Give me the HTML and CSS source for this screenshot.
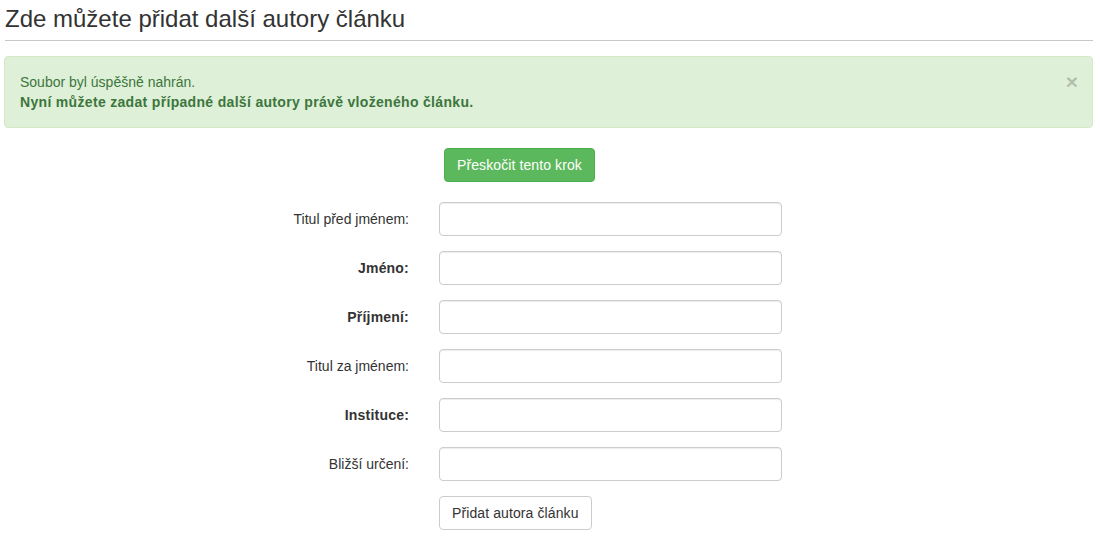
FILE: index.html
```html
<!DOCTYPE html>
<html lang="cs">
<head>
<meta charset="utf-8">
<title>Další autoři</title>
<link rel="stylesheet" href="styles.css">
</head>
<body>
<div class="page">
  <h2 class="page-title">Zde můžete přidat další autory článku</h2>
  <hr class="rule">
  <div class="alert">
    <span class="close">×</span>
    <div>Soubor byl úspěšně nahrán.</div>
    <div class="strong">Nyní můžete zadat případné další autory právě vloženého článku.</div>
  </div>
  <div class="skip-row">
    <button class="btn btn-success" type="button">Přeskočit tento krok</button>
  </div>
  <form class="form">
    <div class="row"><label class="label">Titul před jménem:</label><input class="input" type="text"></div>
    <div class="row"><label class="label bold">Jméno:</label><input class="input" type="text"></div>
    <div class="row"><label class="label bold">Příjmení:</label><input class="input" type="text"></div>
    <div class="row"><label class="label">Titul za jménem:</label><input class="input" type="text"></div>
    <div class="row"><label class="label bold">Instituce:</label><input class="input" type="text"></div>
    <div class="row"><label class="label">Bližší určení:</label><input class="input" type="text"></div>
    <div class="row"><span class="label"></span><button class="btn btn-default" type="button">Přidat autora článku</button></div>
  </form>
</div>
</body>
</html>
```

FILE: styles.css
```css
* { box-sizing: border-box; }
html, body { margin: 0; padding: 0; background: #fff; }
body {
  font-family: "Liberation Sans", Arial, Helvetica, sans-serif;
  font-size: 14px;
  line-height: 20px;
  color: #333;
}
.page {
  padding: 5px 9px 0 4px;
}
.page-title {
  margin: 0;
  padding-left: 1px;
  font-size: 24px;
  font-weight: 400;
  line-height: 27px;
  color: #333;
}
.rule {
  margin: 8px 0 0 1px;
  border: 0;
  border-top: 1px solid #c8c8c8;
  height: 0;
}
.alert {
  position: relative;
  margin-top: 15px;
  padding: 15px 35px 15px 15px;
  background: #dff0d8;
  border: 1px solid #d6e9c6;
  border-radius: 4px;
  color: #3c763d;
}
.alert .strong { font-weight: 700; letter-spacing: 0.32px; }
.close {
  position: absolute;
  top: 14px;
  right: 14px;
  font-size: 21px;
  font-weight: 700;
  line-height: 1;
  color: #000;
  opacity: 0.2;
}
.skip-row {
  margin-top: 20px;
  padding-left: 440px;
}
.btn {
  display: inline-block;
  height: 34px;
  padding: 6px 12px;
  font-family: inherit;
  font-size: 14px;
  line-height: 20px;
  letter-spacing: 0.1px;
  border: 1px solid transparent;
  border-radius: 4px;
  cursor: pointer;
}
.btn-success {
  background: #5cb85c;
  border-color: #4cae4c;
  color: #fff;
}
.btn-default {
  background: #fff;
  border-color: #ccc;
  color: #333;
}
.form {
  margin-top: 20px;
  display: flex;
  flex-direction: column;
  gap: 15px;
}
.row {
  display: flex;
  align-items: center;
  gap: 30px;
}
.label {
  width: 405px;
  text-align: right;
  font-weight: 400;
}
.label.bold { font-weight: 700; letter-spacing: 0.2px; }
.input {
  width: 343px;
  height: 34px;
  padding: 6px 12px;
  border: 1px solid #ccc;
  border-radius: 4px;
  box-shadow: inset 0 1px 1px rgba(0,0,0,0.075);
  font-family: inherit;
  font-size: 14px;
  background: #fff;
}
```
